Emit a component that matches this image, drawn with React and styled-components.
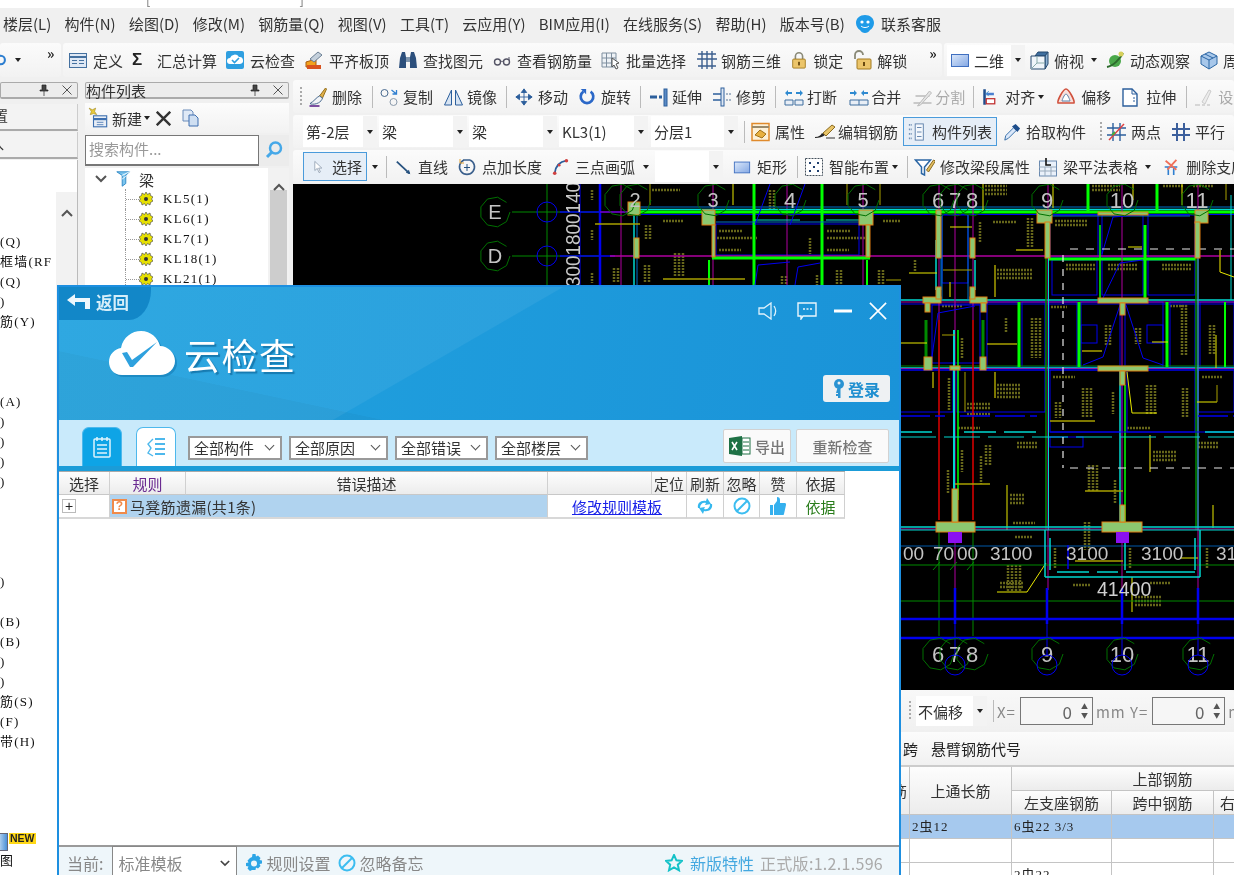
import React from "react";
import styled, { createGlobalStyle } from "styled-components";

const GlobalStyle = createGlobalStyle`
  html, body {
    margin: 0;
    padding: 0;
    background: #f0f0f0;
    overflow: hidden;
  }
  * { box-sizing: border-box; }
`;

const CJK = `"Noto Sans CJK SC", "Noto Sans", sans-serif`;
const SERIF = `"Liberation Serif", "Noto Sans CJK SC", serif`;

const icons = {
  ring: <><circle cx="1" cy="10" r="6" fill="none" stroke="#2d7ed0" strokeWidth="3" /></>,
  define: <><rect x="1.5" y="3.5" width="17" height="14" fill="#dfe8f4" stroke="#44709f" /><path d="M2 7h16" stroke="#44709f" strokeWidth="2" /><path d="M4 10.5h5M11 10.5h5M4 13.5h5M11 13.5h5" stroke="#44709f" /></>,
  cloud: <><rect x="1" y="1" width="18" height="18" rx="2" fill="#2f9fe0" /><path d="M5 14a3 3 0 0 1 0-6 5 5 0 0 1 9-1 3.5 3.5 0 0 1 1 7z" fill="#fff" /><path d="M7 10l2.5 2.5L14 8" fill="none" stroke="#2f9fe0" strokeWidth="1.6" /></>,
  slab: <><path d="M2 12l10-3v8H2z" fill="#f2a21c" stroke="#a85a10" /><rect x="3" y="15" width="14" height="4" fill="#d9531e" /><path d="M6 9l8-7 4 3-8 7z" fill="#c4d0dc" stroke="#6b7f94" /></>,
  binoc: <><path d="M2 8l2-6h3l1 5v11H1zM18 8l-2-6h-3l-1 5v11h7z" fill="#2c4f7c" /><rect x="8" y="7" width="4" height="5" fill="#7f95ad" /></>,
  glasses: <><circle cx="5.5" cy="12" r="3" fill="none" stroke="#556" strokeWidth="1.4" /><circle cx="14.5" cy="12" r="3" fill="none" stroke="#556" strokeWidth="1.4" /><path d="M8.5 12c1-1 2-1 3 0M17 10V7" stroke="#556" fill="none" /></>,
  batch: <><path d="M1 3h14v14H1zM1 8h14M1 13h14M5.5 3v14M10.5 3v14" fill="#eef2f6" stroke="#7f8f9f" /><path d="M11 8l7 5-3 1 2 4-2 1-2-4-2 2z" fill="#fff" stroke="#555" /></>,
  bars3d: <><path d="M2 4h18M2 16h18M1 9h20M6 1v18M11 1v18M16 1v18" stroke="#3c5f8e" strokeWidth="1.4" fill="none" /></>,
  lock: <><path d="M6 9V6a4 4 0 0 1 8 0v3" fill="none" stroke="#8a8a78" strokeWidth="1.8" /><rect x="3" y="9" width="14" height="10" rx="1" fill="#ecc56a" stroke="#a27a20" /><rect x="9" y="12" width="2" height="4" fill="#6a4a10" /></>,
  unlock: <><path d="M3 9V5a4 4 0 0 1 8 0" fill="none" stroke="#8a8a78" strokeWidth="1.8" /><rect x="5" y="9" width="14" height="10" rx="1" fill="#ecc56a" stroke="#a27a20" /><rect x="11" y="12" width="2" height="4" fill="#6a4a10" /></>,
  rect2d: <><defs><linearGradient id="rg" x1="0" y1="0" x2="1" y2="1"><stop offset="0" stopColor="#dbe8fa" /><stop offset="1" stopColor="#84a8e4" /></linearGradient></defs><rect x="1.5" y="4.5" width="17" height="12" fill="url(#rg)" stroke="#3f6fc0" /></>,
  cube: <><path d="M6 6l3-4h10l-3 4z" fill="#3f6f9f" stroke="#24486f" /><path d="M16 6l3-4v12l-3 5z" fill="#8fb3d4" stroke="#24486f" /><path d="M2 6h14v13H2z" fill="#f0f5fa" stroke="#24486f" /><path d="M2 19l6-6h8M8 6v7" stroke="#8aa" fill="none" /></>,
  orbit: <><circle cx="10" cy="11" r="6" fill="#4aa84a" /><path d="M2 17C8 16 15 9 18 3" stroke="#2d6a2d" strokeWidth="2" fill="none" /><circle cx="16" cy="4" r="2.5" fill="#d7d05a" /></>,
  cube2: <><path d="M10 2l8 4v8l-8 5-8-5V6z" fill="#a7c7ea" stroke="#2b66a4" /><path d="M2 6l8 4 8-4M10 10v9M6 4l8 4" fill="none" stroke="#2b66a4" /></>,
  erase: <><path d="M12 9l6-8 1 1-4 9z" fill="#e0b04a" stroke="#96701c" /><path d="M3 16c3-1 6-6 9-7l3 2c-1 4-6 7-12 6z" fill="#f2f4f7" stroke="#4a6b90" /><path d="M2 19h10" stroke="#7c4fa0" strokeWidth="2" /></>,
  copy: <><circle cx="5" cy="6" r="3.5" fill="none" stroke="#4a6b90" /><circle cx="14" cy="15" r="3.5" fill="none" stroke="#8a9aab" /><path d="M12 3l5 4M17 3v4h-4" fill="none" stroke="#2f7fd0" strokeWidth="1.3" /></>,
  mirror: <><path d="M8 3v15H1zM12 3v15h7z" fill="#d7e4f3" stroke="#2c5f9c" /></>,
  move: <><path d="M10 1v18M1 10h18M10 1L7 5h6zM10 19l-3-4h6zM1 10l4-3v6zM19 10l-4-3v6z" stroke="#2c5f9c" fill="#2c5f9c" /></>,
  rotate: <><path d="M6 4a7 7 0 1 0 8 0" fill="none" stroke="#2b68c8" strokeWidth="3" /><path d="M3 1h6v6z" fill="#2b68c8" /></>,
  extend: <><path d="M1 10h7M10 10h3" stroke="#2c5f9c" strokeWidth="3" strokeDasharray="7 2" /><rect x="15" y="2" width="3" height="17" fill="#5a8ac4" stroke="#2c5f9c" /></>,
  trim: <><path d="M1 7h9M1 13h9" stroke="#2c5f9c" strokeWidth="1.5" /><rect x="9" y="1" width="3" height="18" fill="#dfe8f4" stroke="#2c5f9c" /><path d="M14 7h5M14 13h5" stroke="#8aa0b8" strokeDasharray="2 1" strokeWidth="1.5" /></>,
  breakI: <><path d="M2 6l3-3v2h4v2H5v2zM20 6l-3-3v2h-4v2h4v2z" fill="#2f8ad0" /><path d="M2 13h8v5H2zM12 13h8v5h-8z" fill="#e8eef6" stroke="#3f6f9f" /></>,
  merge: <><path d="M9 6L6 3v2H2v2h4v2zM13 6l3-3v2h4v2h-4v2z" fill="#2f8ad0" /><path d="M2 13h18v5H2z" fill="#e8eef6" stroke="#3f6f9f" /><path d="M11 13v5" stroke="#3f6f9f" /></>,
  split: <><path d="M2 16h18M4 9h14" stroke="#bbb" strokeWidth="1.5" /><path d="M6 19l12-15 2 2-11 12z" fill="#e4e4e4" stroke="#bbb" /></>,
  align: <><path d="M3 1v18" stroke="#1f4f8f" strokeWidth="3" /><path d="M5 5h9v3H5z" fill="#4a7fd0" /><path d="M8 3L5 6l3 3" fill="none" stroke="#2f8ad0" /><rect x="5" y="12" width="10" height="6" fill="#fff" stroke="#c03030" strokeWidth="1.5" /></>,
  offset: <><path d="M10 2c3 0 9 12 8 14H2C1 14 7 2 10 2z" fill="#f8e0dc" stroke="#d0503c" strokeWidth="1.6" /><path d="M10 7c1.500 0 4 6 4 7H6c0-1 2.500-7 4-7z" fill="#fff" stroke="#5a80a8" /></>,
  stretch: <><path d="M3 2h9l5 5v12H3z" fill="#fff" stroke="#2c5f9c" strokeWidth="1.4" /><path d="M12 2v5h5M13 11h2M13 14h2" stroke="#2c5f9c" fill="none" /></>,
  setting: <><path d="M2 18h5M9 18h3M14 18h3" stroke="#ccc" strokeWidth="1.5" /><path d="M9 15l7-12 2 1-6 13z" fill="#ececec" stroke="#ccc" /></>,
  attr: <><rect x="2" y="1.500" width="17" height="17" fill="#fdf1d8" stroke="#e08a2c" strokeWidth="1.5" /><path d="M2 5h17" stroke="#9a8a6a" strokeWidth="2" /><path d="M5 13l5-5 6 4-4 4z" fill="#e8b040" stroke="#a07018" /></>,
  editbar: <><path d="M1 15c4 0 6-2 7-4l3 2c-2 2-6 3-10 3z" fill="#222" /><path d="M9 11l9-8 3 2-9 9z" fill="#e8c468" stroke="#8a6a20" /><path d="M12 16h9" stroke="#333" /></>,
  list: <><path d="M1 2h4M1 7h4M1 12h4M1 17h4" stroke="#5a7da8" strokeWidth="2" strokeDasharray="1 1" /><rect x="8" y="1" width="9" height="18" fill="#f4f8fd" stroke="#5a7da8" /><path d="M10 5h5M10 10h5M10 15h5" stroke="#5a7da8" /></>,
  dropper: <><path d="M2 19l1-5 9-9 3 3-9 9z" fill="#dbe8fa" stroke="#2b66a4" /><path d="M10 4l4-3 5 5-3 4z" fill="#1e4e8c" /></>,
  twopt: <><path d="M7 1v18M14 1v18M1 6h19M1 13h19" stroke="#2c5f9c" strokeWidth="1.4" /><path d="M3 18L18 2" stroke="#e04040" strokeWidth="1.5" /><path d="M6 13l3-3" stroke="#3fae3f" strokeWidth="2" /></>,
  parallel: <><path d="M6 1v18M13 1v18M1 7h18M1 13h18" stroke="#3c5f9c" strokeWidth="2" /></>,
  cursor: <><path d="M4 2v13l3.500-3 2.500 6 2-1-2.500-5.500H14z" fill="#fff" stroke="#7f8fa3" /></>,
  line: <><path d="M2 4l14 13" stroke="#27527f" strokeWidth="2" /><path d="M17 18l-5-1.500 3.500-3.500z" fill="#27527f" /></>,
  lengthen: <><path d="M6 3h7M7 3a7.500 7.500 0 1 0 6 0" fill="none" stroke="#3a5f8c" strokeWidth="1.600" /><path d="M10 7v7M7 10.500h6" stroke="#27527f" /><path d="M3 2v4h4" stroke="#e0a030" fill="none" /></>,
  arc: <><path d="M3 17C4 9 9 4 16 3" fill="none" stroke="#2c5f9c" strokeWidth="2" /><circle cx="3" cy="17" r="2" fill="#d04040" /><circle cx="8" cy="8" r="1.500" fill="#d04040" /><circle cx="16" cy="3" r="2" fill="#d04040" /></>,
  smart: <><rect x="1.500" y="1.500" width="17" height="17" fill="#fff" stroke="#44505c" strokeDasharray="2 1" /><path d="M5 5h2v2H5zM13 5h2v2h-2zM5 13h2v2H5zM13 13h2v2h-2zM9 9h2v2H9z" fill="#1f3f6f" /></>,
  funnel: <><path d="M1 3h15l-6 7v8l-3-1.500V10z" fill="#fff" stroke="#2b66a4" strokeWidth="1.500" /><path d="M12 13l7-10 2 1-7 11z" fill="#e2bd5e" stroke="#8a6a20" /></>,
  pingfa: <><rect x="1.500" y="4" width="17" height="15" fill="#eaf1fa" stroke="#6a8ab0" /><path d="M1 10h17M1 14h17M7 10v9M13 10v9" stroke="#9ab" /><path d="M8 1v7h5" fill="none" stroke="#111" strokeWidth="1.600" /></>,
  delsup: <><path d="M3 10h14M7 10v9M13 10v9" stroke="#2f7fd0" strokeWidth="1.800" /><path d="M4 3l12 10M16 2L6 13" stroke="#f0705a" strokeWidth="2" /></>,
  service: <><path d="M10 1c5 0 9 3 9 8 0 3-2 6-4 7-1 2-3 3-5 3s-4-1-5-3c-2-1-4-4-4-7 0-5 4-8 9-8z" fill="#1f9be8" /><circle cx="7" cy="8" r="1.600" fill="#fff" /><circle cx="13" cy="8" r="1.600" fill="#fff" /><path d="M6 12c2 2 6 2 8 0" stroke="#fff" fill="none" /></>,
  newDoc: <><path d="M1 1l3 1.500L7 1 6 4l2 3-3-1-3 1 1-3z" fill="#e8c93a" stroke="#9a8420" strokeWidth=".5" /><rect x="5" y="8" width="12" height="10" fill="#e8eef6" stroke="#3c6fb0" /><path d="M5 11h12" stroke="#3c6fb0" strokeWidth="2" /><path d="M8 14h6M8 16h6" stroke="#7a9cc8" /></>,
  duplicate: <><path d="M2 2h8l2 2v9H2z" fill="#dfe9f6" stroke="#6a8cba" /><path d="M8 7h6l3 3v8H8z" fill="#cfdff2" stroke="#3f6fb0" /></>,
  tree: <><path d="M2 2h14l-4 4v9l-4 3V6z" fill="#7cc5ee" stroke="#2a86c4" /><path d="M8 6l8-4M8 10l4-3" stroke="#fff" /></>,
};

const Icon = ({ name, w = 20, h = 20 }) => (
  <svg width={w} height={h} viewBox="0 0 20 20" style={{ flex: "none" }}>
    {icons[name]}
  </svg>
);

const Page = styled.div`
  position: relative;
  width: 1234px;
  height: 875px;
  overflow: hidden;
  background: #f0f0f0;
  font-family: ${CJK};
  font-size: 15px;
  color: #333;
  filter: blur(0.35px);
`;

const TitleClip = styled.div`
  height: 8px;
  background: #fff;
  padding-left: 146px;
  width: 100%;
  overflow: hidden;
  div {
    display: flex;
    justify-content: space-between;
    width: 158px;
    line-height: 0;
    color: #777;
    font-size: 13px;
  }
`;

const MenuBar = styled.div`
  display: flex;
  align-items: center;
  gap: 13.300px;
  height: 35px;
  padding: 0 0 4px 3px;
  white-space: nowrap;
`;

const MenuService = styled.span`
  display: inline-flex;
  align-items: center;
  gap: 6px;
  margin-left: -3px;
`;

const ToolRow = styled.div`
  display: flex;
  height: 34px;
  white-space: nowrap;
  gap: 2px;
`;

const Band = styled.div`
  display: flex;
  align-items: center;
  flex: ${(p) => (p.$grow ? 1 : "none")};
  width: ${(p) => (p.$w ? `${p.$w}px` : "auto")};
  height: ${(p) => (p.$h ? `${p.$h}px` : "100%")};
  padding-left: ${(p) => p.$pad || 0}px;
  background: linear-gradient(#fbfbfb, #f2f2f2);
  border-radius: 3px;
  overflow: hidden;
  white-space: nowrap;
`;

const ToolItem = styled.span`
  display: inline-flex;
  flex: none;
  align-items: center;
  gap: ${(p) => p.$gap ?? 5}px;
  margin-right: ${(p) => p.$mr ?? 9}px;
  color: ${(p) => (p.$off ? "#aaa" : "#333")};
`;

const Active = styled(ToolItem)`
  height: 29px;
  padding: 0 4px 0 ${(p) => p.$pl ?? 5}px;
  background: #e6eef7;
  border: 1.5px solid #4a9bdb;
`;

const Tool = ({ i, w, children, ...rest }) => (
  <ToolItem {...rest}>
    <Icon name={i} w={w} />
    {children}
  </ToolItem>
);

const Sep = styled.i`
  flex: none;
  width: 1px;
  height: 22px;
  margin: 0 ${(p) => p.$r ?? 6}px 0 ${(p) => p.$l ?? 1}px;
  background: #bbb;
`;

const Grip = styled.i`
  flex: none;
  width: 2px;
  height: 20px;
  margin: 0 ${(p) => p.$r ?? 5}px 0 ${(p) => p.$l ?? 3}px;
  background: repeating-linear-gradient(#aaa 0 2px, transparent 2px 4px);
`;

const Caret = styled.i`
  flex: none;
  width: 0;
  height: 0;
  margin: 0 ${(p) => p.$r ?? 9}px 0 ${(p) => p.$l ?? 0}px;
  border: 3.5px solid transparent;
  border-top: 4px solid #222;
  border-bottom: 0;
`;

const More = styled.span`
  flex: none;
  margin: -14px 0 0 ${(p) => p.$l ?? 0}px;
  font-size: 14px;
  font-weight: 700;
  letter-spacing: -2px;
  color: #222;
`;

const Sigma = styled.b`
  flex: none;
  width: 15px;
  font-family: "Liberation Sans", sans-serif;
  font-size: 17px;
  color: #222;
`;

const Combo = styled.span`
  display: flex;
  flex: none;
  align-items: center;
  justify-content: space-between;
  width: ${(p) => p.$w}px;
  height: ${(p) => p.$h ?? 31}px;
  margin-right: ${(p) => p.$mr ?? 2}px;
  padding-left: 3px;
  background: #fff;
  color: #333;
  u {
    display: flex;
    align-items: center;
    justify-content: center;
    width: 14px;
    height: 100%;
    background: #f3f3f3;
    text-decoration: none;
  }
`;

const Main = styled.div`
  display: flex;
  margin-top: 3px;
  height: 795px;
`;

const LeftPanel = styled.div`
  display: flex;
  flex-direction: column;
  flex: none;
  width: ${(p) => p.$w}px;
  margin-left: ${(p) => p.$ml ?? 0}px;
  padding-top: 2px;
`;

const PanelHead = styled.div`
  display: flex;
  align-items: center;
  flex: none;
  height: 17px;
  padding-right: 5px;
  background: #ececec;
  border: 1px solid #aaa;
  border-bottom-width: 2px;
  border-radius: 2px;
  font-size: 15px;
  line-height: 15px;
  color: #333;
`;

const PanelTitle = styled.span`
  flex: 1;
`;

const PanelGlyph = styled.span`
  display: flex;
  margin-left: ${(p) => p.$ml ?? 0}px;
`;

const SideRow = styled.div`
  flex: none;
  height: 27px;
  margin-top: ${(p) => p.$mt ?? 1}px;
  padding-top: 1px;
  overflow: hidden;
  background: #f3f3f3;
  border-bottom: 2px solid #aaa;
  border-right: 1px solid #ccc;
  font-size: 14px;
  span {
    display: block;
    margin-left: ${(p) => p.$shift}px;
  }
`;

const SideList = styled.div`
  display: flex;
  flex: 1;
  margin-top: 1px;
  background: #fff;
  border-right: 1px solid #bbb;
`;

const SideColumn = styled.div`
  flex: 1;
  min-width: 0;
  padding-top: 72px;
  overflow: hidden;
`;

const SideItem = styled.div`
  height: 20px;
  line-height: 20px;
  font-family: ${SERIF};
  font-size: 13px;
  letter-spacing: 1.2px;
  white-space: nowrap;
  color: #111;
`;

const SideBadge = styled.div`
  display: flex;
  align-items: flex-start;
  gap: 1px;
  margin: 81px 0 -2px -1px;
  height: 20px;
`;

const SideCell = styled.span`
  flex: none;
  width: 9px;
  height: 18px;
  overflow: hidden;
  background: linear-gradient(90deg, #b8d4f0, #4a90d8);
  border: 1px solid #667;
  border-left: 0;
`;

const NewTag = styled.span`
  padding: 0 1px;
  background: #ffd816;
  font-family: "Liberation Sans", sans-serif;
  font-size: 10.500px;
  font-weight: 700;
  line-height: 11px;
  color: #222;
`;

const SideScroll = styled.div`
  flex: none;
  width: 21px;
  height: 498px;
  margin-top: 32px;
  padding-top: 8px;
  text-align: center;
  background: #f2f2f2;
`;

const ListTools = styled.div`
  display: flex;
  align-items: center;
  flex: none;
  height: 30px;
  margin-top: 4px;
  padding-left: 3px;
  background: linear-gradient(#fcfcfc, #f2f2f2);
`;

const SearchRow = styled.div`
  display: flex;
  flex: none;
  height: 31px;
  margin-top: 2px;
  background: #ececec;
`;

const SearchInput = styled.div`
  flex: 1;
  margin-right: 30px;
  padding-left: 3px;
  background: #fff;
  border: 1px solid #777;
  border-bottom-width: 2px;
  color: #999;
  line-height: 26px;
`;

const SearchButton = styled.span`
  display: flex;
  position: absolute;
  left: 260px;
  top: 136px;
  width: 28px;
  height: 28px;
  align-items: center;
  justify-content: center;
`;

const TreeBox = styled.div`
  display: flex;
  flex: 1;
  margin-top: 2px;
  background: #fff;
`;

const TreeBody = styled.div`
  flex: 1;
  padding-top: 1px;
`;

const TreeRoot = styled.div`
  display: flex;
  align-items: center;
  height: 20px;
  padding-left: 8px;
`;

const TreeLeaf = styled.div`
  display: flex;
  align-items: center;
  height: 20px;
  margin-left: 40px;
  padding-left: 13px;
  font-family: ${SERIF};
  font-size: 13px;
  letter-spacing: 1.3px;
  border-left: 1px dotted #999;
  color: #111;
`;

const TreeDots = styled.i`
  flex: none;
  width: 13px;
  margin-left: -13px;
  border-top: 1px dotted #999;
`;

const TreeScroll = styled.div`
  flex: none;
  width: 21px;
  text-align: center;
  background: #f2f2f2;
  div {
    height: 22px;
    padding-top: 6px;
  }
  p {
    height: 100%;
    margin: 0 2px;
    background: #cdcdcd;
  }
`;

const Work = styled.div`
  display: flex;
  flex-direction: column;
  flex: 1;
  min-width: 0;
  margin-left: 4px;
`;

const Canvas = styled.div`
  flex: none;
  height: 506px;
  margin-top: 1px;
  background: #000;
  overflow: hidden;
  svg {
    display: block;
  }
`;

const OffsetBar = styled(Band)`
  flex: none;
  height: 42px;
  padding-left: 615px;
  background: linear-gradient(#f8f8f8, #f0f0f0);
`;

const SpinField = styled.span`
  display: flex;
  flex: none;
  align-items: center;
  justify-content: flex-end;
  width: 73px;
  height: 28px;
  padding-right: 4px;
  margin: 0 3px 0 4px;
  background: #f6f6f6;
  border: 1px solid #777;
  font-size: 17px;
  color: #666;
  u {
    margin-left: 9px;
    font-size: 7px;
    line-height: 9px;
    text-decoration: none;
    color: #555;
    text-align: center;
  }
`;

const Muted = styled.span`
  flex: none;
  letter-spacing: 1px;
  color: #888;
`;

const TabStrip = styled.div`
  flex: none;
  height: 35px;
  padding-left: 610px;
  display: flex;
  align-items: center;
  gap: 13px;
  background: linear-gradient(#fcfcfc, #f1f1f1);
  border-bottom: 2px solid #ccc;
  color: #222;
`;

const RebarTable = styled.div`
  display: grid;
  grid-template-columns: 617px 102px 100px 102px 100px;
  grid-auto-rows: 24px;
  font-size: 15px;
`;

const RebarHead = styled.div`
  display: flex;
  align-items: center;
  justify-content: ${(p) => p.$edge ? "flex-end" : "center"};
  grid-column: ${(p) => p.$col || "auto"};
  grid-row: ${(p) => p.$row || "auto"};
  overflow: hidden;
  background: linear-gradient(#fdfdfd, #ececec);
  border-right: 1px solid #c4c4c4;
  border-bottom: 1px solid #c4c4c4;
  white-space: nowrap;
`;

const RebarCell = styled.div`
  padding-left: 2px;
  line-height: 23px;
  background: ${(p) => (p.$on ? "#a6c9ee" : "#fff")};
  border-right: 1px solid #c4c4c4;
  border-bottom: 1px solid #c4c4c4;
  font-family: ${SERIF};
  font-size: 13px;
  letter-spacing: 1px;
  color: #222;
`;

const Dialog = styled.div`
  position: absolute;
  left: 57px;
  top: 285px;
  width: 844px;
  height: 590px;
  display: flex;
  flex-direction: column;
  background: #fff;
  border: 2px solid #1d8fe0;
  border-bottom: 0;
`;

const DialogHead = styled.div`
  flex: none;
  height: 133px;
  background:
    linear-gradient(150deg, rgba(255, 255, 255, 0.06) 0 47%, transparent 47.200%),
    linear-gradient(12deg, rgba(0, 0, 0, 0.03) 0 22%, transparent 22.200%),
    linear-gradient(100deg, #22a3df, #1a93d8);
`;

const HeadTop = styled.div`
  display: flex;
  justify-content: space-between;
  height: 33px;
`;

const BackTab = styled.div`
  display: flex;
  align-items: center;
  gap: 5px;
  width: 92px;
  padding: 0 0 3px 8px;
  background: #1287c8;
  border-bottom-right-radius: 22px 30px;
  color: #d6eef9;
  font-size: 16.500px;
  font-weight: 700;
`;

const WinControls = styled.div`
  display: flex;
  align-items: center;
  gap: 17px;
  padding: 14px 12px 0 0;
  color: #e6f4fb;
`;

const LogoRow = styled.div`
  display: flex;
  align-items: center;
  gap: 7px;
  height: 55px;
  padding: 12px 0 0 50px;
`;

const LogoText = styled.span`
  font-size: 36px;
  line-height: 40px;
  color: #fff;
  letter-spacing: 1.500px;
  text-shadow: 2px 2px 1px rgba(0, 80, 130, 0.5);
`;

const LoginRow = styled.div`
  display: flex;
  justify-content: flex-end;
  padding-right: 9px;
`;

const LoginBtn = styled.div`
  display: flex;
  align-items: center;
  justify-content: center;
  gap: 3px;
  width: 67px;
  height: 27px;
  background: #eef1f3;
  border-radius: 3px;
  color: #1f8fd0;
  font-size: 16px;
  font-weight: 700;
`;

const FilterBand = styled.div`
  display: flex;
  flex: none;
  align-items: center;
  height: 51px;
  padding: 6px 10px 0 23px;
  background: #c9eafb;
  border-bottom: 5px solid #1b9cd8;
`;

const Tab = styled.div`
  display: flex;
  align-items: center;
  justify-content: center;
  flex: none;
  align-self: flex-end;
  width: 40px;
  height: 39px;
  margin-right: ${(p) => p.$mr}px;
  background: ${(p) => (p.$on ? "#0ea4e6" : "#fff")};
  border: 1px solid #4db8ec;
  border-bottom: 0;
  border-radius: 7px 7px 0 0;
`;

const FilterSelect = styled.div`
  display: flex;
  flex: none;
  align-items: center;
  justify-content: space-between;
  width: ${(p) => p.$w}px;
  height: 24px;
  margin: 3px 7px 0 0;
  padding: 0 6px 0 4px;
  background: #fff;
  border: 2px solid #999;
  color: #333;
`;

const Chevron = styled.i`
  flex: none;
  width: 7px;
  height: 7px;
  margin: -4px 1px 0 0;
  border-right: 1px solid #555;
  border-bottom: 1px solid #555;
  transform: rotate(45deg);
`;

const BandBtn = styled.div`
  display: flex;
  flex: none;
  align-items: center;
  justify-content: center;
  gap: 4px;
  width: ${(p) => p.$w}px;
  height: 34px;
  margin-left: ${(p) => p.$ml}px;
  background: #fafafa;
  border: 1px solid #d2d2d2;
  border-radius: 2px;
  color: #777;
  font-size: 15px;
  font-weight: 500;
`;

const ResultArea = styled.div`
  flex: 1;
  background: #fff;
`;

const ResultGrid = styled.div`
  display: grid;
  grid-template-columns: 51px 76px 362px 104px 35px 37px 36px 37px 48px;
  grid-template-rows: 23px 24px;
  width: 786px;
  border-top: 1px solid #aaa;
`;

const ResultHead = styled.div`
  display: flex;
  align-items: center;
  justify-content: ${(p) => p.$end ? "flex-end" : "center"};
  padding-right: ${(p) => p.$end ? 2 : 0}px;
  background: linear-gradient(#fdfdfd, #ececec);
  border-right: 1px solid #d0d0d0;
  border-bottom: 1px solid #c8c8c8;
  color: ${(p) => p.$c || "#333"};
  white-space: nowrap;
`;

const ResultCell = styled.div`
  display: flex;
  align-items: center;
  justify-content: ${(p) => p.$left ? "flex-start" : "center"};
  grid-column: ${(p) => p.$span ? `span ${p.$span}` : "auto"};
  padding-left: ${(p) => p.$pl ?? 0}px;
  background: ${(p) => p.$bg || "#fff"};
  border-right: 1px solid #d0d0d0;
  border-bottom: 2px solid #d8d8d8;
  color: ${(p) => p.$c || "#333"};
  letter-spacing: ${(p) => p.$ls ?? 0}px;
  white-space: nowrap;
`;

const PlusBox = styled.span`
  display: flex;
  align-items: center;
  justify-content: center;
  width: 14px;
  height: 14px;
  background: #fff;
  border: 1px solid #bbb;
  font-family: "Liberation Sans", sans-serif;
  font-size: 14px;
  line-height: 12px;
  color: #222;
`;

const QuestionMark = styled.span`
  display: flex;
  align-items: center;
  justify-content: center;
  flex: none;
  width: 15px;
  height: 15px;
  margin-right: 3px;
  background: #fff;
  border: 2px solid #f08a4a;
  font-family: "Liberation Sans", sans-serif;
  font-size: 12px;
  font-weight: 700;
  color: #f08a4a;
`;

const TemplateLink = styled.a`
  color: #1a22e8;
  text-decoration: underline;
`;

const Footer = styled.div`
  display: flex;
  flex: none;
  align-items: center;
  height: 30px;
  padding: 0 16px 0 8px;
  background: #eef6fa;
  border-top: 2px solid #9a9a9a;
  font-size: 16px;
  color: #888;
  white-space: nowrap;
`;

const FooterText = styled.span`
  padding-top: 3px;
  letter-spacing: ${(p) => p.$ls ?? 0}px;
  color: ${(p) => p.$c || "#888"};
`;

const FooterSelect = styled.div`
  display: flex;
  flex: none;
  align-items: center;
  justify-content: space-between;
  width: 125px;
  height: 30px;
  margin: 0 8px 0 9px;
  padding: 3px 6px 0 5px;
  background: #fff;
  border: 1px solid #888;
  border-bottom: 0;
`;

const FooterLink = styled.span`
  display: inline-flex;
  align-items: center;
  gap: ${(p) => p.$gap ?? 3}px;
  margin-right: ${(p) => p.$mr ?? 8}px;
  padding-top: 3px;
  color: ${(p) => p.$c || "#888"};
`;

const Spacer = styled.span`
  flex: 1;
`;

// CAD drawing: page coordinates, so positions read straight off the screenshot
const BG = "#00ff00", CY = "#00d8d0", BL = "#0000f0", DB = "#0070c8", MG = "#b000a0", RD = "#e00000", YL = "#e8e800", OL = "#a8a000", GN = "#008a00", WH = "#e8e8e8";

const lines = [
  // upper-left part of the frame
  [512, 212, 600, 212, GN, 1], [512, 256, 600, 256, GN, 1], [547, 184, 547, 285, GN, 1],
  [560, 212, 640, 212, BL, 1.500], [560, 256, 615, 256, BL, 1.500], [580, 184, 580, 285, BL, 1], [600, 184, 600, 285, BL, 2.500],
  [621, 184, 621, 285, MG, 1], [713, 184, 713, 285, MG, 1], [787, 184, 787, 285, MG, 1], [863, 184, 863, 285, MG, 1],
  [610, 256, 1234, 256, MG, 1.500], [600, 212, 640, 212, MG, 1],
  [640, 207, 1234, 207, DB, 1], [640, 209.500, 1234, 209.500, CY, 1.500], [640, 212, 1234, 212, BG, 3], [640, 214.500, 1234, 214.500, BL, 1],
  [712, 258, 870, 258, BG, 3], [754, 184, 754, 285, BG, 3], [822, 184, 822, 285, BG, 3], [709, 260, 709, 285, BG, 2], [867, 260, 867, 285, BG, 2],
  [634, 215, 634, 285, CY, 1.500], [637, 215, 637, 285, DB, 1], [755, 220, 800, 220, CY, 1], [826, 220, 860, 220, CY, 1], [716, 222, 859, 222, DB, 1],
  [650, 184, 650, 205, OL, 1], [733, 184, 733, 205, YL, 1], [847, 184, 847, 205, OL, 1], [880, 184, 880, 205, OL, 1], [595, 224, 640, 224, OL, 1.500], [663, 279, 745, 279, OL, 1.500], [886, 280, 901, 280, OL, 1],
  [755, 285, 758, 265, BL, 1], [758, 265, 790, 262, BL, 1], [795, 285, 798, 267, BL, 1], [798, 267, 820, 263, BL, 1], [770, 184, 755, 225, BL, 1], [805, 184, 790, 225, BL, 1],
  // horizontal beams on the right
  [900, 300, 1234, 300, CY, 1.500], [900, 302, 1234, 302, MG, 1], [900, 304, 1234, 304, BL, 1],
  [900, 368, 1234, 368, CY, 1.500], [900, 366, 1234, 366, GN, 1], [900, 370, 1234, 370, BL, 1], [900, 368.500, 1234, 368.500, MG, .800],
  [1048, 259, 1196, 259, BG, 3], [1050, 216, 1190, 216, DB, 1],
  // verticals
  [939, 184, 939, 320, MG, 1], [939, 320, 939, 520, RD, 1.500], [973, 184, 973, 320, MG, 1], [973, 320, 973, 520, RD, 1.500], [955, 184, 955, 590, MG, 1],
  [1048, 184, 1048, 590, MG, 1], [1122, 184, 1122, 590, MG, 1], [1198, 184, 1198, 590, MG, 1],
  [1046, 258, 1046, 530, GN, 1.500], [1048.500, 258, 1048.500, 530, CY, 1], [1196, 258, 1196, 530, GN, 1.500], [1198, 258, 1198, 530, CY, 1],
  [1100, 225, 1100, 300, BG, 1.500], [1145, 225, 1145, 300, BG, 3], [1079, 302, 1079, 367, BG, 3], [1019, 302, 1019, 367, BG, 3], [1167, 302, 1167, 367, BG, 3], [1225, 302, 1225, 367, BG, 2],
  [1088, 184, 1088, 211, BG, 3], [1157, 184, 1157, 211, BG, 3], [926, 320, 926, 360, GN, 3], [983, 320, 983, 360, GN, 3],
  [954, 330, 954, 500, CY, 2], [958, 330, 958, 500, BG, 1.500], [1125, 385, 1125, 528, BG, 1.500], [1120, 370, 1120, 528, CY, 1.500],
  [936, 240, 936, 290, CY, 1.500], [941, 240, 941, 290, DB, 1], [975, 260, 975, 290, CY, 1.500], [942, 215, 942, 300, DB, 1], [968, 215, 968, 300, DB, 1], [1231, 195, 1231, 300, CY, 1],
  [900, 290, 900, 410, DB, 1],
  // blue slants
  [1113, 217, 1102, 254, BL, 1], [1120, 263, 1103, 298, BL, 1], [1120, 305, 1103, 357, BL, 1], [1103, 357, 1083, 365, BL, 1], [1126, 305, 1143, 358, BL, 1], [1143, 358, 1163, 365, BL, 1],
  [938, 313, 975, 306, BL, 1], [938, 313, 932, 357, BL, 1], [1113, 217, 1140, 215, BL, 1], [1120, 263, 1143, 260, BL, 1],
  // yellow leaders
  [909, 273, 937, 273, YL, 1], [943, 270, 972, 270, OL, 1], [950, 227, 972, 227, YL, 1], [995, 265, 995, 297, OL, 1.500], [950, 282, 950, 297, OL, 1.500],
  [1016, 250, 1043, 250, OL, 1.500], [1128, 247, 1142, 247, YL, 1], [1182, 184, 1182, 205, YL, 1], [1133, 184, 1133, 200, YL, 1], [1226, 184, 1226, 200, OL, 1], [1053, 184, 1053, 208, YL, 1], [983, 184, 983, 211, YL, 1],
  [1220, 250, 1220, 272, OL, 1.500], [1220, 272, 1234, 277, YL, 1], [900, 343, 927, 343, YL, 1], [942, 335, 955, 335, OL, 1], [987, 344, 1017, 344, OL, 1.500], [1082, 351, 1102, 351, OL, 1.500], [1152, 342, 1168, 342, YL, 1],
  [1216, 335, 1216, 368, YL, 1], [933, 372, 933, 388, OL, 1.500], [965, 372, 965, 412, OL, 1], [995, 372, 995, 398, OL, 1.500], [1127, 372, 1132, 413, YL, 1], [1132, 413, 1157, 413, YL, 1],
  [1197, 402, 1217, 402, YL, 1], [1217, 385, 1217, 402, OL, 1], [1050, 421, 1095, 421, OL, 1.500], [1150, 435, 1150, 472, OL, 1.500],
  [955, 484, 990, 484, OL, 1.500], [1007, 485, 1007, 530, YL, 1], [1085, 491, 1123, 491, OL, 1.500], [1213, 505, 1213, 528, YL, 1],
  [1075, 561, 1123, 561, OL, 1.500], [1180, 558, 1198, 558, YL, 1], [997, 592, 1027, 592, YL, 1], [1027, 592, 1046, 563, YL, 1], [1132, 577, 1132, 612, YL, 1],
  // lower beam and axes
  [900, 527, 1234, 527, CY, 1.500], [900, 529, 1234, 529, MG, 1], [900, 530, 1234, 530, CY, 1],
  [900, 546, 1234, 546, "#0058a8", 1], [900, 565, 1234, 565, GN, 1], [900, 601, 1234, 601, GN, 1],
  [939, 532, 939, 636, GN, 1], [973, 532, 973, 636, GN, 1], [900, 619, 1234, 619, BL, 2.500], [900, 638, 1234, 638, BL, 2.500],
  [955, 588, 955, 624, BL, 2.500], [1047, 588, 1047, 624, BL, 2.500], [1122, 588, 1122, 624, BL, 2.500], [1198, 588, 1198, 624, BL, 2.500],
  [955, 624, 955, 655, BL, 1], [1047, 624, 1047, 655, BL, 1], [1122, 624, 1122, 655, BL, 1], [1198, 624, 1198, 655, BL, 1],
  [1045, 530, 1045, 577, CY, 1.500], [1200, 530, 1200, 577, CY, 1.500], [1045, 577, 1200, 577, CY, 1.500], [1050, 538, 1050, 570, CY, 1.500], [1125, 538, 1125, 570, CY, 1.500], [1195, 538, 1195, 570, CY, 1.500],
  [1057, 572, 1089, 572, CY, 1.500], [1097, 572, 1118, 572, CY, 1.500], [1126, 572, 1195, 572, CY, 1.500], [1068, 545, 1068, 569, BL, 1.500],
  [940, 562, 933, 570, GN, 1], [957, 562, 950, 570, GN, 1], [974, 562, 967, 570, GN, 1],
  // dashed runs
  [900, 416, 945, 416, BL, 1.500, "30 5"], [960, 416, 1037, 416, BL, 1.500, "30 5"], [1198, 416, 1234, 416, BL, 1.500, "30 5"],
  [900, 432, 940, 432, CY, 1.500, "32 8"], [964, 432, 1037, 432, CY, 1.500, "32 8"], [1050, 432, 1234, 432, BL, 1], [1205, 432, 1234, 432, CY, 1.500],
  [900, 437, 1234, 437, CY, 1, "36 8"], [1070, 249, 1234, 249, WH, 1.200, "8 8"], [1070, 468, 1234, 468, WH, 1.200, "8 8"], [1063, 255, 1063, 468, WH, 1.200, "7 7"],
];

const boxes = [
  [716, 224, 143, 31], [1050, 215, 48, 42], [1102, 215, 41, 42], [1148, 215, 47, 42], [1052, 260, 45, 35], [1102, 260, 41, 35], [1148, 260, 47, 35],
  [1049, 302, 28, 65], [1081, 302, 39, 65], [1125, 302, 38, 65], [1170, 302, 25, 65], [1200, 302, 34, 65], [932, 305, 48, 58], [987, 302, 32, 65], [1022, 302, 23, 65],
  [900, 370, 53, 42], [957, 370, 88, 42], [1050, 370, 72, 62], [1127, 370, 68, 62], [1198, 370, 36, 42], [1050, 437, 33, 10], [1081, 325, 16, 18], [1147, 325, 16, 18], [942, 215, 26, 68],
];

// grey-green concrete sections
const concrete = [
  [628, 202, 12, 13], [702, 210, 13, 15], [859, 210, 14, 15], [712, 225, 3, 32], [634, 238, 5, 20], [866, 225, 4, 32],
  [1037, 210, 15, 13], [1045, 222, 5, 36], [1195, 210, 13, 13], [1195, 222, 5, 36], [936, 210, 5, 48], [970, 238, 5, 20],
  [923, 297, 18, 6], [936, 287, 5, 12], [925, 303, 5, 9], [970, 297, 17, 6], [970, 287, 5, 12], [981, 303, 5, 9],
  [924, 357, 8, 13], [980, 357, 6, 13], [950, 366, 10, 4], [1098, 212, 50, 3], [1098, 298, 50, 5], [1098, 366, 50, 5],
  [1120, 303, 5, 12], [1120, 371, 5, 14], [936, 522, 39, 10], [952, 489, 6, 33], [1102, 522, 40, 10], [1120, 505, 5, 17],
];

const purple = [[948, 532, 14, 11], [1116, 532, 13, 11]];

// small illegible notes on the plan, drawn as rows/columns of dashes
const notesH = [
  [993, 222, 24, 1], [1055, 221, 32, 2], [1066, 265, 30, 2], [1162, 265, 30, 2], [1108, 265, 30, 2], [997, 270, 35, 3], [1051, 307, 16, 1], [942, 306, 20, 1], [1170, 306, 17, 1],
  [1053, 377, 22, 1], [1202, 377, 20, 1], [1017, 443, 20, 2], [1198, 443, 20, 2], [985, 186, 22, 3], [1092, 186, 28, 2], [1163, 186, 20, 1], [1193, 186, 20, 1], [997, 385, 24, 4],
  [967, 404, 24, 2], [967, 414, 24, 1], [958, 428, 22, 1], [1127, 428, 24, 1], [1153, 452, 24, 3], [1013, 523, 22, 1], [1015, 537, 18, 1], [1010, 495, 14, 3], [1135, 597, 26, 3],
  [1073, 585, 18, 1], [1150, 583, 20, 1], [1000, 583, 24, 2], [652, 190, 28, 1], [663, 221, 20, 1], [719, 231, 24, 1], [717, 238, 40, 1], [719, 250, 22, 1], [827, 231, 24, 1], [827, 238, 40, 1], [827, 250, 22, 1], [883, 221, 18, 1],
];
const notesV = [
  [1028, 218, 30, 2], [980, 222, 20, 1], [915, 260, 12, 1], [1032, 318, 40, 3], [1006, 318, 14, 1], [962, 338, 20, 1], [1106, 325, 20, 2], [1136, 328, 16, 2], [1182, 305, 50, 2], [1210, 325, 30, 2],
  [1056, 402, 16, 2], [1083, 388, 30, 3], [1113, 392, 22, 1], [1147, 385, 30, 3], [1183, 388, 30, 2], [949, 378, 32, 1], [986, 445, 20, 2], [962, 450, 22, 1], [948, 470, 24, 1], [981, 456, 28, 1],
  [1089, 465, 26, 3], [1115, 480, 24, 1], [1008, 565, 26, 4], [1085, 522, 28, 2], [1055, 548, 20, 1], [1130, 548, 20, 1], [1207, 548, 20, 1], [592, 190, 10, 1], [592, 230, 10, 1], [592, 273, 10, 1],
  [646, 225, 14, 2], [614, 268, 14, 2], [645, 265, 18, 2], [675, 253, 23, 3], [770, 190, 20, 2], [782, 276, 10, 2], [817, 275, 10, 1], [837, 270, 14, 2], [879, 270, 14, 2], [810, 238, 16, 1],
];

const octagon = (cx, cy, r) =>
  Array.from({ length: 9 }, (_, k) => {
    const a = (Math.PI / 4.5) * k;
    return `${(cx + r * Math.cos(a)).toFixed(1)},${(cy + r * Math.sin(a)).toFixed(1)}`;
  }).join(" ");

const bubbles = [
  ["E", 495, 212, 15, 20], ["D", 495, 256, 15, 20], ["", 620, 200, 16, 16], ["2", 635, 200, 16, 20], ["3", 713, 200, 16, 20], ["4", 790, 200, 16, 22], ["5", 863, 200, 16, 20],
  ["6", 938, 200, 16, 22], ["7", 955, 200, 16, 22], ["8", 972, 200, 16, 22], ["9", 1047, 200, 16, 22], ["10", 1122, 200, 16, 22], ["11", 1197, 200, 16, 22],
  ["6", 938, 654, 16, 22], ["7", 955, 654, 16, 22], ["8", 972, 654, 16, 22], ["9", 1047, 654, 16, 22], ["10", 1122, 654, 16, 22], ["11", 1198, 654, 16, 22],
];

const dims = [
  ["00", 903, 560], ["70", 933, 560], ["00", 957, 560], ["3100", 990, 560], ["3100", 1066, 560], ["3100", 1141, 560], ["31", 1216, 560],
];

const CadDrawing = () => (
  <svg width="941" height="506" viewBox="293 184 941 506" fontFamily="'Liberation Sans', sans-serif">
    {notesH.map(([x, y, w, n], k) =>
      Array.from({ length: n }, (_, r) => (
        <line key={`h${k}-${r}`} x1={x} x2={x + w} y1={y + r * 4} y2={y + r * 4} stroke="#66661a" strokeWidth="2.500" strokeDasharray="2 1" />
      ))
    )}
    {notesV.map(([x, y, h, n], k) =>
      Array.from({ length: n }, (_, c) => (
        <line key={`v${k}-${c}`} x1={x + c * 4} x2={x + c * 4} y1={y} y2={y + h} stroke="#66661a" strokeWidth="2.500" strokeDasharray="2 1" />
      ))
    )}
    {boxes.map(([x, y, w, h], k) => (
      <rect key={k} x={x} y={y} width={w} height={h} fill="none" stroke={BL} strokeWidth="1" />
    ))}
    {lines.map(([x1, y1, x2, y2, c, w, d], k) => (
      <line key={k} x1={x1} y1={y1} x2={x2} y2={y2} stroke={c} strokeWidth={w} strokeDasharray={d} />
    ))}
    {concrete.map(([x, y, w, h], k) => (
      <rect key={k} x={x} y={y} width={w} height={h} fill="#8cc870" stroke="#e07c10" strokeWidth="1" />
    ))}
    {purple.map(([x, y, w, h], k) => (
      <rect key={k} x={x} y={y} width={w} height={h} fill="#8a10f0" />
    ))}
    {bubbles.map(([t, x, y, r, fs], k) => (
      <g key={k}>
        <polyline points={octagon(x, y, r)} fill="none" stroke="#007000" strokeWidth="1" />
        {t && (
          <text x={x} y={y + fs * 0.36} fontSize={fs} textAnchor="middle" fill="#c4c4c4">
            {t}
          </text>
        )}
      </g>
    ))}
    {[[547, 212], [547, 256]].map(([x, y], k) => (
      <circle key={k} cx={x} cy={y} r="10" fill="none" stroke={BL} />
    ))}
    {[955, 1047, 1122, 1198].map((x) => (
      <circle key={x} cx={x} cy={665} r="10" fill="none" stroke={BL} />
    ))}
    <text transform="translate(580 287) rotate(-90) scale(.9 1)" fontSize="21" fill="#c8c8c8">
      3001800140
    </text>
    {dims.map(([t, x, y], k) => (
      <text key={k} x={x} y={y} fontSize="19" fill="#c4c4c4">
        {t}
      </text>
    ))}
    <text x="1097" y="596" fontSize="19.500" fill="#d0d0d0">
      41400
    </text>
  </svg>
);

const PinGlyph = () => (
  <svg width="10" height="12" viewBox="0 0 10 12">
    <path d="M3 1h4v5h2v1H1V6h2zM5 7v5" fill="#444" stroke="#222" strokeWidth=".7" />
  </svg>
);

const CloseGlyph = ({ s = 10, c = "#555", w = 1 }) => (
  <svg width={s} height={s} viewBox="0 0 10 10">
    <path d="M.5.5l9 9M9.500.5l-9 9" stroke={c} strokeWidth={w} />
  </svg>
);

const PanelHeader = ({ title, closeGap }) => (
  <PanelHead>
    <PanelTitle>{title}</PanelTitle>
    <PanelGlyph><PinGlyph /></PanelGlyph>
    <PanelGlyph $ml={closeGap}><CloseGlyph /></PanelGlyph>
  </PanelHead>
);

const UpArrow = () => (
  <svg width="12" height="8" viewBox="0 0 12 8">
    <path d="M1 7l5-5 5 5" fill="none" stroke="#555" strokeWidth="2" />
  </svg>
);

const GearDot = () => (
  <svg width="14" height="14" viewBox="0 0 14 14" style={{ flex: "none", marginRight: 10 }}>
    <path d="M7 0l1.500 2.500L11 1l.5 2.500L14 5l-1.500 2L14 9l-2.500 1.500L11 13l-2.500-1.500L7 14l-1.500-2.500L3 13l-.5-2.500L0 9l1.500-2L0 5l2.500-1.500L3 1l2.500 1.500z" fill="#e6e000" stroke="#555" strokeWidth=".7" />
    <circle cx="7" cy="7" r="2" fill="#333" />
  </svg>
);

const sideItems = ["(Q)", "框墙(RF", "(Q)", ")", "筋(Y)", "", "", "", "(A)", ")", ")", ")", ")", "", "", "", "", ")", "", "(B)", "(B)", ")", ")", "筋(S)", "(F)", "带(H)"];

const CloudLogo = () => (
  <svg width="68" height="48" viewBox="0 0 68 48" style={{ flex: "none" }}>
    <path d="M15 47C6 47 2 40 2 34c0-8 6-13 12-14C16 9 25 3 34 3c10 0 17 7 19 15 8 0 15 7 15 15s-7 14-15 14z" fill="#0c6fa8" opacity=".45" />
    <path d="M13 45C4 45 0 38 0 32c0-8 6-13 12-14C14 7 23 1 32 1c10 0 17 7 19 15 8 0 15 7 15 15s-7 14-15 14z" fill="#fff" />
    <path d="M13 23l5-1 5 8 25-18-24 25h-3z" fill="#2ea1de" />
  </svg>
);

const BackArrow = () => (
  <svg width="24" height="18" viewBox="0 0 24 18">
    <path d="M0 7l8-6v4h15v11h-5V9H8v4z" fill="#eef8fd" />
  </svg>
);

const Speaker = () => (
  <svg width="22" height="18" viewBox="0 0 22 18">
    <path d="M1 6h5l7-5v16l-7-5H1zM16 4c2 3 2 7 0 10" fill="none" stroke="#dff1fb" strokeWidth="1.300" />
  </svg>
);

const ChatBox = () => (
  <svg width="20" height="18" viewBox="0 0 20 18">
    <path d="M1 1h18v13H6l-2 3v-3H1z" fill="none" stroke="#eaf6fc" strokeWidth="1.400" />
    <path d="M6 7h2M9.500 7h2M13 7h2" stroke="#eaf6fc" strokeWidth="1.600" />
  </svg>
);

const Minimize = () => (
  <svg width="18" height="4" viewBox="0 0 18 4">
    <rect y="0.500" width="18" height="3" fill="#fff" />
  </svg>
);

const KeyGlyph = () => (
  <svg width="12" height="20" viewBox="0 0 12 20">
    <circle cx="6" cy="5" r="5" fill="#2b93d2" />
    <circle cx="6" cy="4" r="1.500" fill="#eef1f3" />
    <path d="M4.500 9h3v10H5v-2H3v-2h2v-1H3z" fill="#2b93d2" />
  </svg>
);

const NotesTab = ({ c }) => (
  <svg width="18" height="22" viewBox="0 0 18 22">
    <rect x="1" y="3" width="16" height="18" rx="1" fill="none" stroke={c} strokeWidth="1.500" />
    <path d="M4 1v4M9 1v4M14 1v4M4 9h10M4 13h10M4 17h10" stroke={c} strokeWidth="1.500" />
  </svg>
);

const TreeTab = ({ c }) => (
  <svg width="20" height="22" viewBox="0 0 20 22">
    <path d="M9 3h10M9 8h10M9 13h10M9 18h10" stroke={c} strokeWidth="2" />
    <path d="M7 3L2 8l3 4-3 5 5 3" fill="none" stroke={c} strokeWidth="1.400" />
  </svg>
);

const ExcelGlyph = () => (
  <svg width="22" height="20" viewBox="0 0 22 20">
    <path d="M0 2l13-2v20L0 18z" fill="#1e7145" />
    <rect x="13" y="2" width="8" height="16" fill="#fff" stroke="#1e7145" />
    <path d="M14 6h6M14 10h6M14 14h6" stroke="#1e7145" />
    <path d="M3 6l5 8M8 6l-5 8" stroke="#fff" strokeWidth="1.600" />
  </svg>
);

const Refresh = () => (
  <svg width="20" height="18" viewBox="0 0 20 18">
    <path d="M3 11C2 6 6 3 11 4l1-3 4 6-6 1 1-2C8 5 5 7 5 11z" fill="#35b8ee" />
    <path d="M17 7c1 5-3 8-8 7l-1 3-4-6 6-1-1 2c3 1 6-1 6-5z" fill="#35b8ee" />
  </svg>
);

const BanGlyph = ({ s = 18 }) => (
  <svg width={s} height={s} viewBox="0 0 18 18" style={{ flex: "none" }}>
    <circle cx="9" cy="9" r="7.500" fill="none" stroke="#3cbdf0" strokeWidth="2" />
    <path d="M4 14L14 4" stroke="#3cbdf0" strokeWidth="2" />
  </svg>
);

const Thumb = () => (
  <svg width="16" height="18" viewBox="0 0 16 18">
    <path d="M0 8h3v10H0zM4 8l3-4V0c2 0 3 1 3 3v3h5c1 0 1 1 1 2l-2 9c0 1-1 1-2 1H4z" fill="#35b0ee" />
  </svg>
);

const GearBlue = () => (
  <svg width="18" height="18" viewBox="0 0 18 18" style={{ flex: "none" }}>
    <path d="M7.500 0h3l.5 2.500 2-1 2.500 2.500-1 2 2.500.5v3l-2.500.5 1 2-2.500 2.500-2-1-.5 2.500h-3L7 16l-2 1-2.500-2.500 1-2L1 12V9l2.500-.5-1-2L5 4l2-1z" fill="#2ca5e6" />
    <circle cx="9" cy="9.500" r="3" fill="#eef6fa" />
  </svg>
);

const Star = () => (
  <svg width="18" height="18" viewBox="0 0 18 18" style={{ flex: "none" }}>
    <path d="M9 1l2.400 5.300 5.600.6-4.200 3.800 1.200 5.600L9 13.400l-5 2.900 1.200-5.600L1 6.900l5.600-.6z" fill="none" stroke="#15c2c8" strokeWidth="2" />
  </svg>
);

const SearchGlyph = () => (
  <svg width="18" height="18" viewBox="0 0 18 18">
    <circle cx="10.500" cy="7" r="5.500" fill="none" stroke="#46a8e8" strokeWidth="2.500" />
    <path d="M7 11l-5 5" stroke="#46a8e8" strokeWidth="3" />
  </svg>
);

const ChevDown = () => (
  <svg width="10" height="7" viewBox="0 0 12 8">
    <path d="M1 1l5 5 5-5" fill="none" stroke="#444" strokeWidth="2" />
  </svg>
);

const App = () => (
  <Page>
    <GlobalStyle />
    <TitleClip><div><span>[</span><span>]</span></div></TitleClip>
    <MenuBar>
      <span>楼层(L)</span><span>构件(N)</span><span>绘图(D)</span><span>修改(M)</span><span>钢筋量(Q)</span><span>视图(V)</span>
      <span>工具(T)</span><span>云应用(Y)</span><span>BIM应用(I)</span><span>在线服务(S)</span><span>帮助(H)</span><span>版本号(B)</span>
      <MenuService><Icon name="service" />联系客服</MenuService>
    </MenuBar>

    <ToolRow>
      <Band $w={61}>
        <Icon name="ring" w={14} />
        <Caret $l={1} />
        <More $l={17}>»</More>
      </Band>
      <Band $w={879} $pad={5}>
        <Tool i="define">定义</Tool>
        <ToolItem $gap={10} $mr={8}><Sigma>Σ</Sigma>汇总计算</ToolItem>
        <Tool i="cloud">云检查</Tool>
        <Tool i="slab">平齐板顶</Tool>
        <Tool i="binoc">查找图元</Tool>
        <Tool i="glasses">查看钢筋量</Tool>
        <Tool i="batch">批量选择</Tool>
        <Tool i="bars3d" w={22} $gap={4}>钢筋三维</Tool>
        <Tool i="lock" w={18} $gap={5} $mr={9}>锁定</Tool>
        <Tool i="unlock" $gap={5}>解锁</Tool>
        <More $l={13}>»</More>
      </Band>
      <Band $grow $pad={3}>
        <Combo $w={78} $h={31} $mr={4}>
          <ToolItem $mr={0} $gap={4}><Icon name="rect2d" />二维</ToolItem>
          <u><Caret $r={0} /></u>
        </Combo>
        <Tool i="cube" $mr={7}>俯视</Tool>
        <Caret $r={8} />
        <Tool i="orbit">动态观察</Tool>
        <Tool i="cube2" $gap={4}>周</Tool>
      </Band>
    </ToolRow>

    <Main>
      <LeftPanel $w={78}>
        <PanelHeader title="" closeGap={13} />
        <SideRow $mt={5} $shift={-20}><span>布置</span></SideRow>
        <SideRow $shift={-24}><span>导入</span></SideRow>
        <SideList>
          <SideColumn>
            {sideItems.map((t, k) => <SideItem key={k}>{t}</SideItem>)}
            <SideBadge><SideCell /><NewTag>NEW</NewTag></SideBadge>
            <SideItem>图</SideItem>
          </SideColumn>
          <SideScroll><UpArrow /></SideScroll>
        </SideList>
      </LeftPanel>

      <LeftPanel $w={204} $ml={7}>
        <PanelHeader title="构件列表" closeGap={13} />
        <ListTools>
          <ToolItem $gap={2} $mr={5}><Icon name="newDoc" w={22} h={22} />新建</ToolItem>
          <Caret $l={-3} $r={6} />
          <CloseGlyph s={15} c="#333" w={1.600} />
          <span style={{ width: 10 }} />
          <Icon name="duplicate" />
        </ListTools>
        <SearchRow>
          <SearchInput>搜索构件...</SearchInput>
          <SearchButton><SearchGlyph /></SearchButton>
        </SearchRow>
        <TreeBox>
          <TreeBody>
            <TreeRoot>
              <svg width="12" height="8" viewBox="0 0 12 8" style={{ marginLeft: 2, marginRight: 8 }}>
                <path d="M1 1l5 5 5-5" fill="none" stroke="#555" strokeWidth="2" />
              </svg>
              <Icon name="tree" w={18} h={18} />
              <span style={{ marginLeft: 6 }}>梁</span>
            </TreeRoot>
            {["KL5(1)", "KL6(1)", "KL7(1)", "KL18(1)", "KL21(1)"].map((t) => (
              <TreeLeaf key={t}><TreeDots /><GearDot />{t}</TreeLeaf>
            ))}
          </TreeBody>
          <TreeScroll>
            <div><UpArrow /></div>
            <p />
          </TreeScroll>
        </TreeBox>
      </LeftPanel>

      <Work>
        <Band $h={33} $pad={4}>
          <Grip $r={4} />
          <Tool i="erase" w={23} h={23} $gap={3} $mr={9}>删除</Tool>
          <Sep />
          <Tool i="copy" w={21} $gap={3} $mr={9}>复制</Tool>
          <Tool i="mirror" w={23} $gap={2} $mr={8}>镜像</Tool>
          <Sep $l={1} $r={8} />
          <Tool i="move" w={18} $gap={5} $mr={10}>移动</Tool>
          <Tool i="rotate" w={18} $gap={5} $mr={8}>旋转</Tool>
          <Sep $r={8} />
          <Tool i="extend" $gap={3} $mr={10}>延伸</Tool>
          <Tool i="trim" $gap={4} $mr={8}>修剪</Tool>
          <Sep $r={6} />
          <Tool i="breakI" w={22} $gap={3} $mr={10}>打断</Tool>
          <Tool i="merge" w={22} $gap={2} $mr={9}>合并</Tool>
          <Tool i="split" w={23} $gap={2} $mr={7} $off>分割</Tool>
          <Sep $r={8} />
          <Tool i="align" w={17} $gap={6} $mr={3}>对齐</Tool>
          <Caret $r={12} />
          <Tool i="offset" $gap={5} $mr={9}>偏移</Tool>
          <Tool i="stretch" $gap={6} $mr={9}>拉伸</Tool>
          <Sep $r={6} />
          <Tool i="setting" $gap={5} $off>设置</Tool>
        </Band>
        <Band $h={33} style={{ marginTop: 2 }} $pad={10}>
          <Combo $w={74}>第-2层<u><Caret $r={0} /></u></Combo>
          <Combo $w={88}>梁<u><Caret $r={0} /></u></Combo>
          <Combo $w={88}>梁<u><Caret $r={0} /></u></Combo>
          <Combo $w={89} $mr={3}>KL3(1)<u><Caret $r={0} /></u></Combo>
          <Combo $w={87} $mr={5}>分层1<u><Caret $r={0} /></u></Combo>
          <Sep $r={5} />
          <Tool i="attr" $gap={5} $mr={8}>属性</Tool>
          <Tool i="editbar" w={22} $gap={3} $mr={5}>编辑钢筋</Tool>
          <Active $pl={4} $mr={6} $gap={6}><Icon name="list" w={18} />构件列表</Active>
          <Tool i="dropper" w={18} $gap={5} $mr={10}>拾取构件</Tool>
          <Grip $l={4} $r={4} />
          <Tool i="twopt" $gap={5} $mr={10}>两点</Tool>
          <Tool i="parallel" $gap={4}>平行</Tool>
        </Band>
        <Band $h={33} style={{ marginTop: 2 }} $pad={10}>
          <Active $pl={8} $mr={5} $gap={6}><Icon name="cursor" w={14} />选择</Active>
          <Caret $r={7} />
          <Sep $r={8} />
          <Tool i="line" w={18} $gap={5}>直线</Tool>
          <Tool i="lengthen" $gap={5} $mr={10}>点加长度</Tool>
          <Tool i="arc" w={18} $gap={5} $mr={8}>三点画弧</Tool>
          <Caret $r={6} />
          <Combo $w={68} $mr={10}><span /><u><Caret $r={0} /></u></Combo>
          <Tool i="rect2d" w={18} $gap={6} $mr={9}>矩形</Tool>
          <Sep $r={6} />
          <Tool i="smart" $gap={5} $mr={3}>智能布置</Tool>
          <Caret $r={8} />
          <Sep $r={6} />
          <Tool i="funnel" w={21} $gap={5} $mr={8}>修改梁段属性</Tool>
          <Tool i="pingfa" $gap={5} $mr={7}>梁平法表格</Tool>
          <Caret $r={11} />
          <Tool i="delsup" w={18} $gap={6}>删除支座</Tool>
        </Band>
        <Canvas><CadDrawing /></Canvas>
        <OffsetBar>
          <Grip $l={1} $r={5} />
          <Combo $w={71} $h={30} $mr={5} style={{ paddingLeft: 2 }}>不偏移<u><Caret $r={0} /></u></Combo>
          <Sep $l={1} $r={3} />
          <Muted>X=</Muted>
          <SpinField>0<u>▲<br />▼</u></SpinField>
          <Muted>mm Y=</Muted>
          <SpinField>0<u>▲<br />▼</u></SpinField>
          <Muted>m</Muted>
        </OffsetBar>
        <TabStrip><span>跨</span><span>悬臂钢筋代号</span></TabStrip>
        <RebarTable>
          <RebarHead $edge $row="1 / span 2"><span style={{ marginRight: 2 }}>箍筋</span></RebarHead>
          <RebarHead $row="1 / span 2">上通长筋</RebarHead>
          <RebarHead $col="3 / span 3">上部钢筋</RebarHead>
          <RebarHead $col="3">左支座钢筋</RebarHead>
          <RebarHead $col="4">跨中钢筋</RebarHead>
          <RebarHead $col="5" style={{ justifyContent: "flex-start", paddingLeft: 6 }}>右支座钢筋</RebarHead>
          <RebarCell $on />
          <RebarCell $on>2虫12</RebarCell>
          <RebarCell $on>6虫22 3/3</RebarCell>
          <RebarCell $on />
          <RebarCell $on />
          <RebarCell /><RebarCell /><RebarCell /><RebarCell /><RebarCell />
          <RebarCell /><RebarCell /><RebarCell>2虫22</RebarCell><RebarCell /><RebarCell />
        </RebarTable>
      </Work>
    </Main>

    <Dialog>
      <DialogHead>
        <HeadTop>
          <BackTab><BackArrow />返回</BackTab>
          <WinControls>
            <Speaker />
            <ChatBox />
            <Minimize />
            <CloseGlyph s={18} c="#fff" w={0.9} />
          </WinControls>
        </HeadTop>
        <LogoRow>
          <CloudLogo />
          <LogoText>云检查</LogoText>
        </LogoRow>
        <LoginRow>
          <LoginBtn><KeyGlyph />登录</LoginBtn>
        </LoginRow>
      </DialogHead>
      <FilterBand>
        <Tab $on $mr={14}><NotesTab c="#dff4fd" /></Tab>
        <Tab $mr={12}><TreeTab c="#4db8ec" /></Tab>
        <FilterSelect $w={94}>全部构件<Chevron /></FilterSelect>
        <FilterSelect $w={99}>全部原因<Chevron /></FilterSelect>
        <FilterSelect $w={93}>全部错误<Chevron /></FilterSelect>
        <FilterSelect $w={93}>全部楼层<Chevron /></FilterSelect>
        <BandBtn $w={68} $ml={128}><ExcelGlyph />导出</BandBtn>
        <BandBtn $w={93} $ml={5}>重新检查</BandBtn>
      </FilterBand>
      <ResultArea>
        <ResultGrid>
          <ResultHead>选择</ResultHead>
          <ResultHead $c="#6a2a90">规则</ResultHead>
          <ResultHead>错误描述</ResultHead>
          <ResultHead />
          <ResultHead>定位</ResultHead>
          <ResultHead>刷新</ResultHead>
          <ResultHead>忽略</ResultHead>
          <ResultHead>赞</ResultHead>
          <ResultHead>依据</ResultHead>
          <ResultCell $left $pl={3}><PlusBox>+</PlusBox></ResultCell>
          <ResultCell $span={2} $left $bg="#b0d3ef" $pl={2} $ls={0.300}><QuestionMark>?</QuestionMark>马凳筋遗漏(共1条)</ResultCell>
          <ResultCell $span={2}><TemplateLink>修改规则模板</TemplateLink></ResultCell>
          <ResultCell><Refresh /></ResultCell>
          <ResultCell><BanGlyph /></ResultCell>
          <ResultCell><Thumb /></ResultCell>
          <ResultCell $c="#2a7d1c">依据</ResultCell>
        </ResultGrid>
      </ResultArea>
      <Footer>
        <FooterText>当前:</FooterText>
        <FooterSelect>标准模板<ChevDown /></FooterSelect>
        <FooterLink><GearBlue />规则设置</FooterLink>
        <FooterLink><BanGlyph />忽略备忘</FooterLink>
        <Spacer />
        <FooterLink $c="#44a8e0" $gap={7} $mr={6}><Star />新版特性</FooterLink>
        <FooterText $c="#aaa" $ls={0.300}>正式版:1.2.1.596</FooterText>
      </Footer>
    </Dialog>
  </Page>
);

export default App;
